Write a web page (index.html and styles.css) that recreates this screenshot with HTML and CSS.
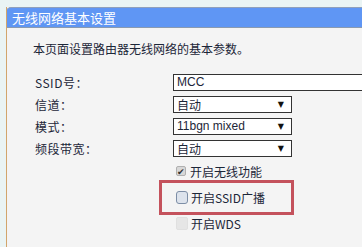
FILE: index.html
```html
<!DOCTYPE html>
<html lang="zh">
<head>
    <meta charset="UTF-8">
    <meta name="viewport" content="width=device-width, initial-scale=1.0">
    <title>无线网络基本设置</title>
    <link rel="stylesheet" href="styles.css">
</head>
<body>

    <div class="panel">
        <div class="panel-title">无线网络基本设置</div>

        <div class="panel-body">
            <p class="intro">本页面设置路由器无线网络的基本参数。</p>

            <div class="form">
                <div class="label">SSID号：</div>
                <div class="field"><div class="text-input">MCC</div></div>

                <div class="label">信道：</div>
                <div class="field"><div class="select">自动<span class="arrow">&#9660;</span></div></div>

                <div class="label">模式：</div>
                <div class="field"><div class="select latin">11bgn mixed<span class="arrow">&#9660;</span></div></div>

                <div class="label">频段带宽：</div>
                <div class="field"><div class="select">自动<span class="arrow">&#9660;</span></div></div>
            </div>

            <div class="checks">
                <div class="check-row">
                    <span class="box checked">&#10004;</span>开启无线功能
                </div>
                <div class="check-row">
                    <span class="box empty"></span>开启SSID广播
                </div>
                <div class="check-row">
                    <span class="box disabled"></span>开启WDS
                </div>
                <!-- 红框标注 -->
                <div class="highlight"></div>
            </div>
        </div>
    </div>

</body>
</html>
```

FILE: styles.css
```css
body {
    margin: 0;
    background-color: #eaf4f4;
    font-family: "Noto Sans CJK SC", "Liberation Sans", sans-serif;
    font-size: 12px;
    color: #1c2638;
    overflow: hidden;
    height: 247px;
}

.panel {
    margin-top: 7px;
    margin-left: 6px;
    border-left: 1px solid #d2a56c;
    background-color: #f4f4f4;
    height: 240px;
    overflow: hidden;
}

.panel-title {
    height: 19px;
    line-height: 19px;
    background-color: #5f96f4;
    border-top: 1px solid #8fa0bb;
    border-bottom: 1px solid #8a9ab0;
    border-top-left-radius: 5px;
    margin-left: -1px;
    padding-left: 6px;
    color: white;
    font-size: 13px;
}

.panel-body {
    padding-left: 26px;
}

.intro {
    margin: 0;
    padding-top: 14px;
    height: 32px;
    line-height: 14px;
    font-size: 12px;
}

.form {
    display: grid;
    grid-template-columns: 138px 1fr;
    row-gap: 5px;
    margin-left: 2px;
}

.label {
    height: 17px;
    line-height: 17px;
    letter-spacing: 0.5px;
}

.field {
    height: 17px;
}

/* 输入框延伸到窗口右边 */
.text-input {
    height: 15px;
    line-height: 15px;
    border: 1px solid #333;
    border-right: none;
    background-color: white;
    padding-left: 3px;
    font-family: "Liberation Sans", sans-serif;
}

.select {
    position: relative;
    width: 114px;
    height: 15px;
    line-height: 15px;
    border: 1px solid #333;
    background-color: white;
    padding-left: 3px;
}

.select.latin {
    font-family: "Liberation Sans", sans-serif;
}

.arrow {
    position: absolute;
    right: 7px;
    top: 0;
    font-family: "DejaVu Sans", sans-serif;
    font-size: 8px;
    color: #111;
}

.checks {
    position: relative;
    margin-top: 1px;
    margin-left: 143px;
}

.check-row {
    display: flex;
    align-items: center;
    height: 26px;
}

.box {
    width: 10px;
    height: 10px;
    margin-right: 4px;
    border-radius: 2px;
    box-sizing: border-box;
    display: flex;
    align-items: center;
    justify-content: center;
}

.box.checked {
    background-color: #d8d8d8;
    border: 1px solid #b0b0b0;
    color: #333;
    font-size: 9px;
    line-height: 1;
}

.box.empty {
    width: 12px;
    height: 13px;
    margin-right: 3px;
    background-color: #dde3ec;
    border: 1px solid #7d8ea6;
    border-radius: 3px;
}

.box.disabled {
    width: 12px;
    height: 13px;
    margin-right: 3px;
    background-color: #e6e6e6;
    border: 1px solid #e0e0e0;
}

.highlight {
    position: absolute;
    left: -17px;
    top: 22px;
    width: 129px;
    height: 29px;
    border: 3px solid #c4525c;
}
```
